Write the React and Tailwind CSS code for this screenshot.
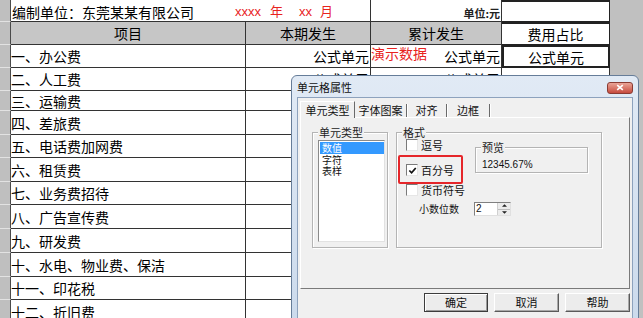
import { useState } from 'react'

const ROWS = [
  { label: '一、办公费', h: 'h-[23px]', formula: true },
  { label: '二、人工费', h: 'h-[23px]', formula: true },
  { label: '三、运输费', h: 'h-[20px]' },
  { label: '四、差旅费', h: 'h-[24px]' },
  { label: '五、电话费加网费', h: 'h-[23px]' },
  { label: '六、租赁费', h: 'h-[24px]' },
  { label: '七、业务费招待', h: 'h-[23px]' },
  { label: '八、广告宣传费', h: 'h-[24px]' },
  { label: '九、研发费', h: 'h-[24px]' },
  { label: '十、水电、物业费、保洁', h: 'h-[24px]' },
  { label: '十一、印花税', h: 'h-[23px]' },
  { label: '十二、折旧费', h: 'h-[24px]' },
]

const TABS = [
  { label: '单元类型', w: 'w-[55px]' },
  { label: '字体图案', w: 'w-[52px]' },
  { label: '对齐', w: 'w-[40px]' },
  { label: '边框', w: 'w-[43px]' },
]

function RowHead() {
  return <div className="w-[11px] shrink-0 bg-[#bfbfbf] border-r border-r-[#4a4a4a] border-b border-b-[#e2e2e2]" />
}

function Check({ checked }) {
  return (
    <span className="w-[12px] h-[12px] shrink-0 bg-white border border-t-[#7a7a7a] border-l-[#7a7a7a] border-r-[#e6e6e6] border-b-[#e6e6e6] flex items-center justify-center">
      {checked && (
        <svg viewBox="0 0 10 10" className="w-[9px] h-[9px]">
          <path d="M1.5 5 L4 7.6 L8.6 2.2" stroke="#111" strokeWidth="1.9" fill="none" />
        </svg>
      )}
    </span>
  )
}

function Group({ label, className, children }) {
  return (
    <div className={`relative border border-[#b4b4b4] shadow-[inset_1px_1px_0_#fff,1px_1px_0_#fff] ${className}`}>
      <span className="absolute -top-[8px] left-[5px] px-[1px] bg-[#f0f0f0] text-[11px] leading-[14px] text-[#222]">
        {label}
      </span>
      {children}
    </div>
  )
}

function Btn({ children, primary }) {
  return (
    <div
      className={`h-[19px] flex items-center justify-center text-[11px] leading-none bg-[#ececec] border ${
        primary
          ? 'w-[64px] border-[#3c3c3c] shadow-[inset_1px_1px_0_#fff,inset_-1px_-1px_0_#9a9a9a]'
          : 'w-[65px] border-t-white border-l-white border-r-[#5a5a5a] border-b-[#5a5a5a] shadow-[inset_-1px_-1px_0_#a8a8a8]'
      }`}
    >
      {children}
    </div>
  )
}

export default function App() {
  const [tab, setTab] = useState(0)
  const [pct, setPct] = useState(true)

  return (
    <div className="relative w-[643px] h-[318px] overflow-hidden bg-[#c0c0c0] text-black font-['Noto_Sans_CJK_SC',sans-serif]">
      {/* ---- sheet ---- */}
      <div className="flex flex-col">
        {/* title row */}
        <div className="flex h-[22px]">
          <RowHead />
          <div className="w-[360px] shrink-0 bg-white border-r border-b border-[#333] flex items-end pb-[1px] pl-px">
            <span className="w-[223px] shrink-0 text-[14px] leading-[16px]">编制单位：东莞某某有限公司</span>
            <span className="text-[13px] leading-[16px] text-[#e8231e] font-['Liberation_Sans','Noto_Sans_CJK_SC',sans-serif]">
              xxxx<span className="ml-[9px]">年</span>
              <span className="ml-[16px]">xx</span>
              <span className="ml-[8px]">月</span>
            </span>
          </div>
          <div className="w-[131px] shrink-0 bg-white border-r border-b border-[#333] flex items-end justify-end pr-[1px] pb-[2px]">
            <span className="text-[11px] leading-none font-bold text-[#222]">单位:元</span>
          </div>
          <div className="w-[108px] shrink-0 bg-white border-t-2 border-r border-b border-[#222]" />
        </div>

        {/* header row */}
        <div className="flex h-[23px]">
          <RowHead />
          <div className="w-[235px] shrink-0 bg-[#c6c6c6] border-r border-b border-[#333] flex items-center justify-center text-[14px] leading-none">项目</div>
          <div className="w-[125px] shrink-0 bg-[#c6c6c6] border-r border-b border-[#333] flex items-center justify-center text-[14px] leading-none">本期发生</div>
          <div className="w-[131px] shrink-0 bg-[#c6c6c6] border-r border-b border-[#333] flex items-center justify-center text-[14px] leading-none">累计发生</div>
          <div className="w-[108px] shrink-0 bg-white border-t-2 border-r border-b border-[#222] flex items-center justify-center text-[14px] leading-none">费用占比</div>
        </div>

        {ROWS.map((r, i) => (
          <div key={r.label} className={`flex ${r.h}`}>
            <RowHead />
            <div className="w-[235px] shrink-0 bg-white border-r border-b border-[#333] flex items-center text-[14px] leading-none">
              {r.label}
            </div>
            <div className="w-[125px] shrink-0 bg-white border-r border-b border-[#333] flex items-center justify-end pr-[1px] text-[14px] leading-none">
              {r.formula && '公式单元'}
            </div>
            <div className="w-[131px] shrink-0 bg-white border-r border-b border-[#333] flex justify-between pr-[1px] text-[14px] leading-none">
              {i === 0 && <span className="text-[#e8231e] pt-[1px]">演示数据</span>}
              <span className="self-center ml-auto">{r.formula && '公式单元'}</span>
            </div>
            <div
              className={`w-[108px] shrink-0 bg-white flex items-center justify-center text-[14px] leading-none ${
                i === 0 ? 'border-2 border-[#222]' : 'border-r border-b border-[#333]'
              }`}
            >
              {i === 0 && '公式单元'}
            </div>
          </div>
        ))}
      </div>

      {/* ---- 单元格属性 dialog ---- */}
      <div className="absolute left-[291px] top-[75px] w-[348px] h-[252px] rounded-t-[6px] border border-[#667d99] bg-gradient-to-b from-[#e1eaf5] to-[#cbdaec] px-[5px] text-[11px] text-[#111]">
        <div className="h-[21px] flex items-center justify-between">
          <span className="leading-none pt-[1px]">单元格属性</span>
          <div className="w-[26px] h-[12px] mt-[2px] rounded-[3px] border border-[#8a3b33] bg-gradient-to-b from-[#e9a397] to-[#c64a3e] flex items-center justify-center">
            <svg viewBox="0 0 10 8" className="w-[8px] h-[7px]">
              <path d="M1.5 1 L8.5 7 M8.5 1 L1.5 7" stroke="#fff" strokeWidth="2" />
            </svg>
          </div>
        </div>

        <div className="h-[240px] border border-[#8da2bd] bg-[#f0f0f0] pt-[3px] pl-[2px] flex flex-col">
          {/* tabs */}
          <div className="h-[16px] flex items-end">
            {TABS.map((t, i) =>
              i === tab ? (
                <div
                  key={t.label}
                  onClick={() => setTab(i)}
                  className={`${t.w} h-[17px] -mb-px relative z-10 bg-[#f0f0f0] border-t border-l border-t-white border-l-white border-r border-r-[#6a6a6a] flex items-center justify-center leading-none`}
                >
                  {t.label}
                </div>
              ) : (
                <div
                  key={t.label}
                  onClick={() => setTab(i)}
                  className={`${t.w} h-[13px] border-r border-r-[#6a6a6a] shadow-[1px_0_0_#fff] flex items-center justify-center leading-none`}
                >
                  {t.label}
                </div>
              )
            )}
          </div>

          {/* panel */}
          <div className="w-[330px] h-[172px] border border-t-white border-l-white border-r-[#7a7a7a] border-b-[#7a7a7a] pt-[14px] pl-[11px] flex gap-[8px]">
            <Group label="单元类型" className="w-[76px] h-[116px] pt-[7px] pl-[5px]">
              <div className="w-[67px] h-[102px] bg-white border border-t-[#8a8a8a] border-l-[#8a8a8a] border-r-[#e2e2e2] border-b-[#e2e2e2] pt-px pl-px text-[10px]">
                <div className="h-[12px] bg-[#3399ff] text-white leading-[12px] pl-[2px]">数值</div>
                <div className="leading-[11px] pl-[2px]">字符</div>
                <div className="leading-[11px] pl-[2px]">表样</div>
              </div>
            </Group>

            <Group label="格式" className="w-[206px] h-[116px] pt-[6px] pl-[9px] flex gap-[19px]">
              <div className="w-[50px] shrink-0 flex flex-col whitespace-nowrap">
                <label className="h-[12px] flex items-center gap-[2px] leading-none">
                  <Check />
                  <span className="ml-[1px]">逗号</span>
                </label>
                <label onClick={() => setPct(!pct)} className="h-[12px] mt-[13px] flex items-center gap-[2px] leading-none">
                  <Check checked={pct} />
                  <span className="ml-[1px]">百分号</span>
                </label>
                <label className="h-[12px] mt-[8px] flex items-center gap-[2px] leading-none">
                  <Check />
                  <span className="ml-[1px]">货币符号</span>
                </label>
                <div className="mt-[6px] ml-[13px] flex items-center gap-[15px] leading-none">
                  <span className="shrink-0 text-[10px]">小数位数</span>
                  <div className="w-[37px] h-[14px] shrink-0 bg-white border border-t-[#808080] border-l-[#808080] border-r-[#e0e0e0] border-b-[#e0e0e0] flex">
                    <span className="flex-1 text-[10px] leading-[12px] pl-px font-['Liberation_Sans',sans-serif]">2</span>
                    <div className="w-[13px] flex flex-col bg-[#ececec] border-l border-[#d0d0d0]">
                      <div className="flex-1 flex items-center justify-center border-b border-[#bdbdbd]">
                        <svg viewBox="0 0 6 3" className="w-[5px] h-[3px]"><path d="M0 3 L3 0 L6 3 Z" fill="#222" /></svg>
                      </div>
                      <div className="flex-1 flex items-center justify-center">
                        <svg viewBox="0 0 6 3" className="w-[5px] h-[3px]"><path d="M0 0 L3 3 L6 0 Z" fill="#222" /></svg>
                      </div>
                    </div>
                  </div>
                </div>
              </div>

              <div className="pt-[8px]">
                <Group label="预览" className="w-[113px] h-[26px] pt-[7px] pl-[6px]">
                  <span className="text-[10px] leading-none font-['Liberation_Sans',sans-serif]">12345.67%</span>
                </Group>
              </div>

              {/* highlight */}
              <div className="absolute left-[1px] top-[22px] w-[65px] h-[29px] border-2 border-[#e5262a] rounded-[2px]" />
            </Group>
          </div>

          {/* buttons */}
          <div className="mt-[4px] w-[330px] flex justify-end gap-[6px]">
            <Btn primary>确定</Btn>
            <Btn>取消</Btn>
            <Btn>帮助</Btn>
          </div>
        </div>
      </div>
    </div>
  )
}
